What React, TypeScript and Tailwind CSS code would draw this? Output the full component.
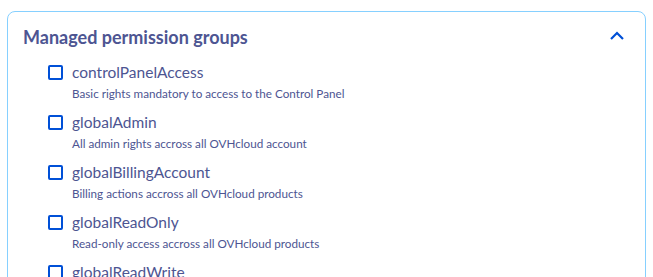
import { type FunctionComponent } from "react";

interface PermissionGroup {
  name: string;
  description: string;
}

const GROUPS: PermissionGroup[] = [
  {
    name: "controlPanelAccess",
    description: "Basic rights mandatory to access to the Control Panel",
  },
  { name: "globalAdmin", description: "All admin rights accross all OVHcloud account" },
  {
    name: "globalBillingAccount",
    description: "Billing actions accross all OVHcloud products",
  },
  {
    name: "globalReadOnly",
    description: "Read-only access accross all OVHcloud products",
  },
  {
    name: "globalReadWrite",
    description: "Read and write access accross all OVHcloud products",
  },
];

function GroupRow({ group }: { group: PermissionGroup }) {
  return (
    <label className="flex items-start gap-[9px] h-[50px]">
      <span className="mt-[1px] size-[15px] shrink-0 rounded-[2px] border-2 border-[#0050d7] bg-white" />
      <span className="flex flex-col">
        <span className="text-[15.5px] leading-[17px] text-[#4d5592]">{group.name}</span>
        <span className="mt-[5px] text-[11.7px] leading-[14px] text-[#4d5592]">
          {group.description}
        </span>
      </span>
    </label>
  );
}

const App: FunctionComponent = () => {
  return (
    <div
      className="w-[653px] h-[277px] overflow-hidden bg-white pl-[7px] pt-[11px]"
      style={{ fontFamily: "Lato, 'Open Sans', sans-serif" }}
    >
      <div className="w-[639px] h-[300px] rounded-[8px] border border-[#86d0ff] bg-white">
        <div className="flex items-center justify-between pl-[15px] pr-[20px] h-[50px]">
          <h2 className="text-[18px] font-bold leading-[24px] text-[#4d5592]">
            Managed permission groups
          </h2>
          <svg width="16" height="10" viewBox="0 0 16 10" className="mb-[2px]">
            <path d="M2 8 L8 2 L14 8" fill="none" stroke="#0050d7" strokeWidth="2.2" />
          </svg>
        </div>
        <div className="pl-[40px] pt-[2px] flex flex-col">
          {GROUPS.map((g) => (
            <GroupRow key={g.name} group={g} />
          ))}
        </div>
      </div>
    </div>
  );
};

export default App;
